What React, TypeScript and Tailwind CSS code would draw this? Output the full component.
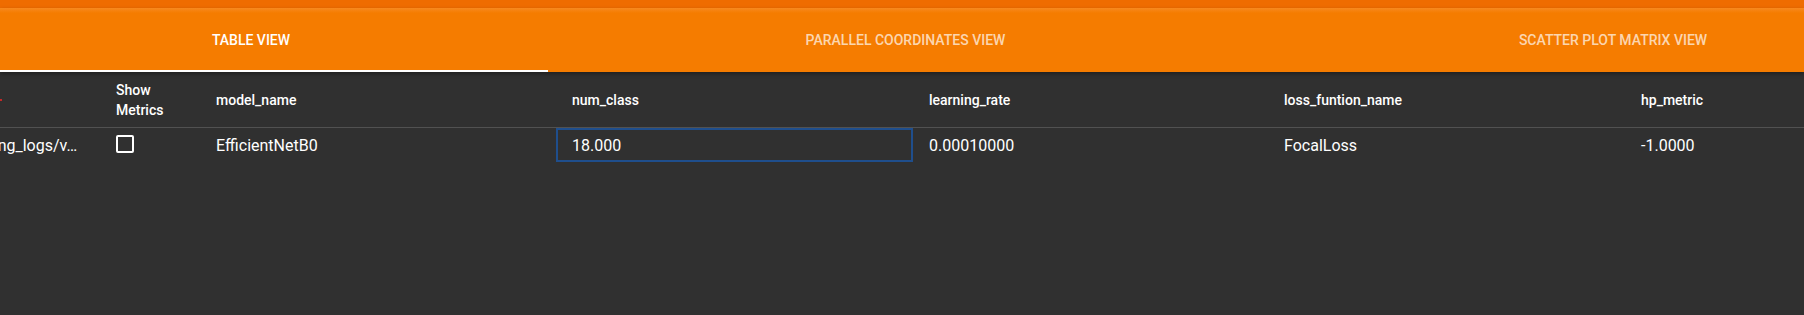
import React from "react";

const tabs = [
  { label: "Table View", width: "w-[594px]", active: true },
  { label: "Parallel Coordinates View", width: "w-[715px]", active: false },
  { label: "Scatter Plot Matrix View", width: "w-[700px]", active: false },
];

const headCell =
  "h-[56px] border-b border-[#515151] px-4 flex items-center text-white font-medium text-sm leading-5";
const bodyCell = "h-[34px] px-4 pt-[2px] flex items-center text-white text-base";

export default function App() {
  return (
    <div className="w-[1804px] h-[315px] bg-[#303030] overflow-hidden font-['Roboto',sans-serif]">
      <div className="h-2 bg-[#ef6c00]" />

      {/* Tabs */}
      <div className="relative z-10 h-16 bg-[linear-gradient(#f8891f,#f57c00_5px)] shadow-[0_2px_4px_rgba(0,0,0,0.35)] overflow-hidden">
        <div className="flex h-full -ml-[46px]">
          {tabs.map((t) => (
            <div
              key={t.label}
              className={`${t.width} shrink-0 relative h-full flex items-center justify-center text-sm font-medium uppercase ${
                t.active ? "text-white" : "text-white/70"
              }`}
            >
              {t.label}
              {t.active && <span className="absolute left-0 right-0 bottom-0 h-[2px] bg-white" />}
            </div>
          ))}
        </div>
      </div>

      {/* Table */}
      <div className="overflow-hidden">
        <div className="-ml-[46px] grid grid-cols-[146px_100px_356px_357px_355px_357px_400px]">
          <div className={`${headCell} relative`}>
            <span className="absolute left-[46px] top-[27px] w-[2px] h-[2px] bg-[#c62828]" />
          </div>
          <div className={headCell}>
            <span>
              Show
              <br />
              Metrics
            </span>
          </div>
          <div className={headCell}>model_name</div>
          <div className={headCell}>num_class</div>
          <div className={headCell}>learning_rate</div>
          <div className={headCell}>loss_funtion_name</div>
          <div className={headCell}>hp_metric</div>

          <div className={`${bodyCell} !pl-2 whitespace-nowrap`}>training_logs/v…</div>
          <div className="h-[34px] px-4 pt-[7px]">
            <div className="w-[18px] h-[18px] border-2 border-white rounded-[2px]" />
          </div>
          <div className={bodyCell}>EfficientNetB0</div>
          <div className={`${bodyCell} border-2 border-[#1f4e8c] pl-[14px]`}>18.000</div>
          <div className={bodyCell}>0.00010000</div>
          <div className={bodyCell}>FocalLoss</div>
          <div className={bodyCell}>-1.0000</div>
        </div>
      </div>
    </div>
  );
}
